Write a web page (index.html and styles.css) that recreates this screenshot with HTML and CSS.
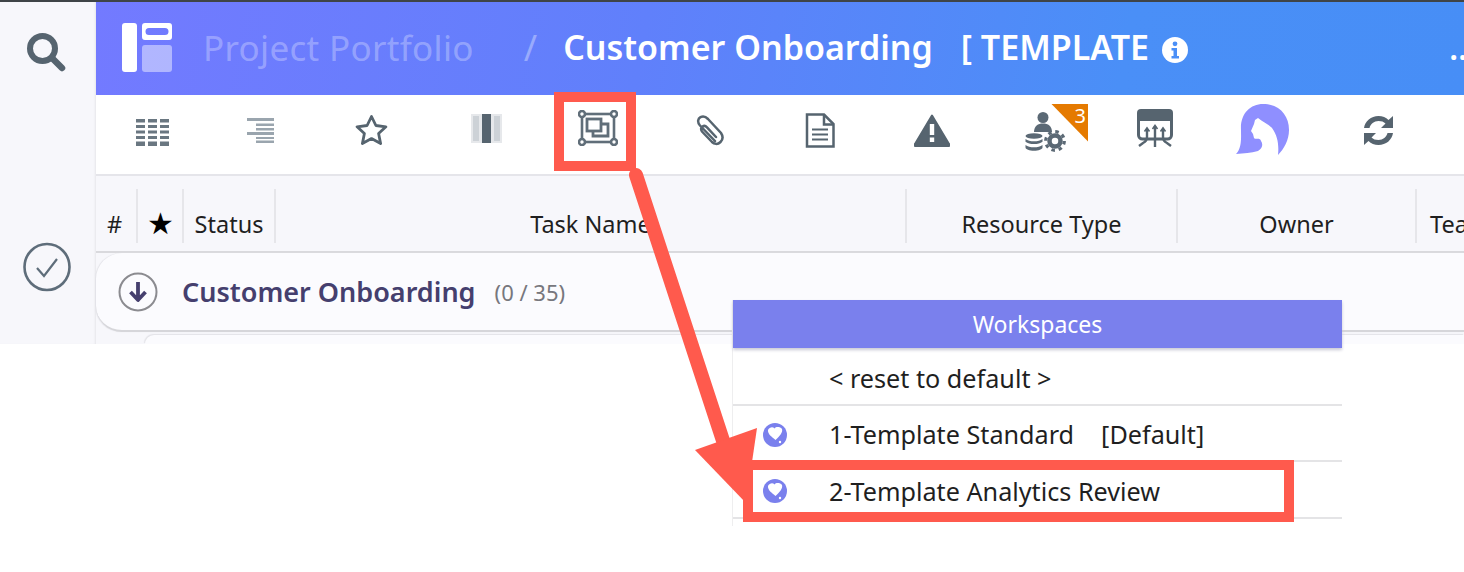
FILE: index.html
```html
<!DOCTYPE html>
<html lang="en">
<head>
<meta charset="utf-8">
<title>Customer Onboarding</title>
<link rel="stylesheet" href="styles.css">
</head>
<body>
<div class="canvas">
  <div class="app">
    <aside class="sidebar">
      <svg class="side-search" viewBox="0 0 40 40"><circle cx="16.500" cy="16.500" r="12.500" fill="none" stroke="#56646f" stroke-width="6"/><path d="M26 26l10 10" stroke="#56646f" stroke-width="6.500" stroke-linecap="round"/></svg>
      <svg class="side-check" viewBox="0 0 48 50"><ellipse cx="24" cy="25" rx="22.500" ry="23" fill="none" stroke="#5e6d7a" stroke-width="2.600"/><path d="M14 26l7 8 13-17" fill="none" stroke="#5e6d7a" stroke-width="2.200"/></svg>
    </aside>
    <main class="main">
      <header class="topbar">
        <svg class="logo" viewBox="0 0 50 49"><rect width="15" height="49" rx="3" fill="#fff"/><path fill-rule="evenodd" d="M23 0h24a3 3 0 0 1 3 3v11a3 3 0 0 1-3 3H23a3 3 0 0 1-3-3V3a3 3 0 0 1 3-3zm4 5a2.500 2.500 0 0 0 0 7h16a2.500 2.500 0 0 0 0-7z" fill="#fff"/><rect x="20" y="22" width="30" height="27" rx="3" fill="#fff" fill-opacity=".45"/></svg>
        <span class="crumb">Project Portfolio</span>
        <span class="slash">/</span>
        <span class="title">Customer Onboarding</span>
        <span class="title tag">[ TEMPLATE</span>
        <svg class="info" viewBox="0 0 26 26"><circle cx="13" cy="13" r="13" fill="#fff"/><circle cx="13" cy="6.800" r="2.400" fill="#4a8ff7"/><path d="M9.500 11h5.500v8h2v2.500H9.500V19h2v-5.500h-2z" fill="#4a8ff7"/></svg>
        <span class="more">..</span>
      </header>

      <nav class="toolbar">
        <span class="tool tool-low"><svg width="33" height="27" viewBox="0 0 33 27" fill="#6a7781"><path d="M0 0h9v3.500H0zM12 0h9v3.500h-9zM24 0h9v3.500h-9zM0 6h9v3H0zM12 6h9v3h-9zM24 6h9v3h-9zM0 11.500h9v3H0zM12 11.500h9v3h-9zM24 11.500h9v3h-9zM0 17h9v3H0zM12 17h9v3h-9zM24 17h9v3h-9zM0 22.500h9V27H0zM12 22.500h9V27h-9zM24 22.500h9V27h-9z"/></svg></span>
        <span class="tool"><svg width="27" height="25" viewBox="0 0 27 25" fill="#9aa5ae"><path d="M0 0h27v3H0zM9 5.500h18v2.500H9zM9 10h18v2.500H9zM0 14h27v3H0zM9 19h18v2H9zM9 22.500h18V25H9z"/></svg></span>
        <span class="tool"><svg width="33" height="31" viewBox="0 0 33 31"><path d="M16.500 1.500l4.400 9 10 1.300-7.300 6.800 2 10-9.100-5-9.100 5 2-10-7.300-6.800 10-1.300z" fill="none" stroke="#56646f" stroke-width="2.800" stroke-linejoin="round"/></svg></span>
        <span class="tool tool-high"><svg width="31" height="29" viewBox="0 0 31 29"><rect width="31" height="29" fill="#e6e8eb"/><rect x="2" y="2" width="6" height="25" fill="#cdd2d7"/><rect x="23" y="2" width="6" height="25" fill="#cdd2d7"/><rect x="11" width="9" height="29" fill="#56646f"/></svg></span>
        <span class="tool tool-high"><svg width="40" height="36" viewBox="0 0 40 36" fill="none" stroke="#606e79" stroke-width="2.600"><rect x="4" y="4" width="32" height="28"/><rect x="9" y="9" width="14" height="12" stroke-width="2.800"/><path d="M23 14h7v12H15v-5" stroke-width="2.800"/><g fill="#fff"><circle cx="4" cy="4" r="3"/><circle cx="36" cy="4" r="3"/><circle cx="4" cy="32" r="3"/><circle cx="36" cy="32" r="3"/></g></svg></span>
        <span class="tool"><svg width="30" height="31" viewBox="0 0 30 31" fill="none" stroke="#56646f" stroke-width="2.500" stroke-linecap="round"><path d="M21 26L6 10.500C3 7 4 3.500 6.500 2.200 9.500.8 12 2 14 4l13 14c2 3 2 6.500-.5 9-3 3-6.500 2-8.500 0L8 16.500c-1.500-2-1-4 .5-5s3-.8 4.500.8l9 9.700"/></svg></span>
        <span class="tool"><svg width="30" height="35" viewBox="0 0 30 35" fill="none" stroke="#56646f" stroke-width="2.500"><path d="M2 1.500h17l9.500 9.500v22.500H2z"/><path d="M19 1.500v10h9.500"/><path d="M7 16.500h16M7 21.500h16M7 26.500h16" stroke-width="2.200"/></svg></span>
        <span class="tool"><svg width="36" height="33" viewBox="0 0 36 33"><path d="M18 1.500L35 30a1.500 1.500 0 0 1-1.300 2.500H2.300A1.500 1.500 0 0 1 1 30z" fill="#56646f" stroke="#56646f" stroke-linejoin="round" stroke-width="2"/><rect x="15.800" y="10" width="4.400" height="11" fill="#fff"/><rect x="15.800" y="23.500" width="4.400" height="4.500" fill="#fff"/></svg></span>
        <span class="tool tool-badge">
          <svg width="41" height="40" viewBox="0 0 41 40" fill="#5b6975"><circle cx="18" cy="5.500" r="5.500"/><path d="M9 20c0-6 4-8.500 9-8.500s9 2.500 9 8.500H9z"/><ellipse cx="9" cy="24" rx="8.500" ry="2.800"/><path d="M.5 27c2 1.800 5 2.300 8.500 2.300s6.500-.5 8.500-2.300v2.800c-2 1.800-5 2.300-8.500 2.300s-6.500-.5-8.500-2.300zM.5 33c2 1.800 5 2.300 8.500 2.300s6.500-.5 8.500-2.300v2.500c0 1.900-4 3.200-8.500 3.200S.5 37.400.5 35.500z"/><circle cx="30" cy="29" r="5.500" fill="none" stroke="#5b6975" stroke-width="4.500"/><circle cx="30" cy="29" r="9.300" fill="none" stroke="#5b6975" stroke-width="3.200" stroke-dasharray="3.500 3.800"/></svg>
          <span class="badge"><span class="badge-num">3</span></span>
        </span>
        <span class="tool"><svg width="36" height="42" viewBox="0 0 36 42" fill="none" stroke="#56646f"><path d="M4 0h28a4 4 0 0 1 4 4v8H0V4a4 4 0 0 1 4-4z" fill="#56646f" stroke="none"/><path d="M1.500 10v16a4 4 0 0 0 4 4h25a4 4 0 0 0 4-4V10" stroke-width="3"/><path d="M18 17v21M10 20v8q0 4-4 6l-4 3M26 20v8q0 4 4 6l4 3" stroke-width="2.400"/><path d="M15.500 20l2.500-3.500 2.500 3.500M7.500 22.500l2.500-3.500 2.500 3.500M23.500 22.500l2.500-3.500 2.500 3.500" stroke-width="1.600"/></svg></span>
        <span class="tool"><svg width="54" height="52" viewBox="0 0 54 52"><path d="M0 50C6 44 5 34 5 26 4 10 14 0 27 0c16 0 26 11 26 26 0 10-5 19-11 25 1-9 0-19-6-27-4-4-9-6-14-10l-3 2-1 4-3 7 2 3 1 4c2 2 6-1 7 3 2 3 2 7-3 10-7 2-14 2-22 3z" fill="#8f8fff"/></svg></span>
        <span class="tool"><svg width="31" height="29" viewBox="0 0 31 29" fill="#56646f"><path d="M1 12C2 5 8 0 15.500 0c4 0 7.500 1.500 10 4L30 0v12H18l4.500-4.500C20.800 5.800 18.500 5 15.500 5 11 5 7.500 8 6.500 12zM30 17c-1 7-7 12-14.500 12-4 0-7.500-1.500-10-4L1 29V17h12l-4.500 4.500c1.700 1.700 4 2.500 7 2.500 4.500 0 8-3 9-7z"/></svg></span>
      </nav>

      <div class="thead">
        <span class="th th-num"><span>#</span></span>
        <span class="th th-star"><span>★</span></span>
        <span class="th"><span>Status</span></span>
        <span class="th"><span>Task Name</span></span>
        <span class="th"><span>Resource Type</span></span>
        <span class="th"><span>Owner</span></span>
        <span class="th th-team"><span>Team</span></span>
      </div>

      <div class="group">
        <svg class="group-toggle" viewBox="0 0 40 40"><circle cx="20" cy="20" r="18.500" fill="none" stroke="#8b8b90" stroke-width="2"/><path d="M20 10v18M12.500 20l7.500 8 7.500-8" fill="none" stroke="#453f6e" stroke-width="3.800" stroke-linejoin="round"/></svg>
        <span class="group-name">Customer Onboarding</span>
        <span class="group-count">(0 / 35)</span>
      </div>
      <div class="subgroup"></div>
    </main>
  </div>

  <section class="popup">
    <div class="popup-head">Workspaces</div>
    <div class="popup-row">&lt; reset to default &gt;</div>
    <div class="popup-row">
      <svg class="globe" viewBox="0 0 24 24"><circle cx="12" cy="12" r="12" fill="#7a80ed"/><path d="M5 7c1.500-3 5-3.500 6.500-1.500C13 3.500 17 3.500 19 6c1 3-2 7-6.500 11C9 14 4.500 11 5 7z" fill="#fff"/><circle cx="17" cy="19" r="1.200" fill="#fff"/></svg>
      <span>1-Template Standard</span><span class="row-default">[Default]</span>
    </div>
    <div class="popup-row popup-row-last">
      <svg class="globe" viewBox="0 0 24 24"><circle cx="12" cy="12" r="12" fill="#7a80ed"/><path d="M5 7c1.500-3 5-3.500 6.500-1.500C13 3.500 17 3.500 19 6c1 3-2 7-6.500 11C9 14 4.500 11 5 7z" fill="#fff"/><circle cx="17" cy="19" r="1.200" fill="#fff"/></svg>
      <span>2-Template Analytics Review</span>
    </div>
  </section>

  <svg class="arrow" viewBox="0 0 1464 572"><path d="M636 175L730 462" fill="none" stroke="#ff5a4d" stroke-width="14" stroke-linecap="round"/><path d="M695 450L757 428 746 503z" fill="#ff5a4d"/></svg>
  <div class="mark mark-tool"></div>
  <div class="mark mark-row"></div>
</div>
</body>
</html>
```
FILE: styles.css
```css
* { box-sizing: border-box; }
html, body { margin: 0; height: 100%; background: #fff; overflow: hidden; }
body { font-family: "Noto Sans", "Open Sans", sans-serif; color: #1f1f1f; }

.canvas { position: relative; width: 1464px; height: 572px; overflow: hidden; background: #fff; }

.app { display: flex; height: 344px; border-top: 2px solid #3f4447; overflow: hidden; }

.sidebar { flex: 0 0 96px; background: #f7f7fb; display: flex; flex-direction: column; align-items: center; padding-top: 30px; box-shadow: inset -2px 0 3px -2px #d5d5da; }
.side-search { width: 40px; height: 40px; margin-left: -5px; }
.side-check { width: 48px; height: 50px; margin-top: 170px; margin-left: -2px; }

.main { flex: 1; min-width: 0; background: #f7f7fb; display: flex; flex-direction: column; }

.topbar { flex: 0 0 93px; display: flex; align-items: center; padding: 0 0 3px 26px; color: #fff; background: linear-gradient(100deg, #737aff 0%, #6080fb 40%, #4a8ff7 75%, #478ef6 100%); white-space: nowrap; }
.logo { width: 50px; height: 49px; margin-top: 1px; }
.crumb { margin-left: 31px; font-size: 35px; color: rgba(255, 255, 255, .3); letter-spacing: .32px; }
.slash { margin-left: 50px; font-size: 36px; color: rgba(255, 255, 255, .35); }
.title { font-size: 34px; font-weight: 600; }
.slash + .title { margin-left: 26px; }
.tag { margin-left: 28px; }
.info { width: 26px; height: 26px; margin-left: 13px; margin-top: 6px; }
.more { margin-left: auto; margin-right: -3px; font-size: 32px; font-weight: 600; }

.toolbar { flex: 0 0 81px; background: #fff; border-bottom: 2px solid #e5e5ea; padding-bottom: 9px; display: grid; grid-template-columns: 112px 104px 118px 112px 112px 110px 112px 112px 138px 58px 158px 72px; align-items: center; justify-items: center; }
.tool { display: flex; position: relative; }
.tool-low { margin-top: 4px; }
.tool-high { margin-top: -4px; }
.tool-badge { width: 64px; height: 48px; padding-top: 8px; margin-top: -5px; }
.badge { position: absolute; left: 26px; top: 0; width: 37px; height: 38px; background: #e57a00; clip-path: polygon(0 0, 100% 0, 100% 100%); }
.badge-num { position: absolute; right: 2px; top: 0; color: #fff; font-size: 20px; line-height: 24px; }

.thead { flex: 0 0 77px; display: grid; grid-template-columns: 42px 46px 92px 631px 271px 239px 1fr; align-items: stretch; border-bottom: 2px solid #d9d9dd; padding: 13px 0 8px; font-size: 23.500px; color: #1f1f1f; white-space: nowrap; overflow: hidden; }
.th { display: flex; align-items: flex-end; justify-content: center; border-right: 2px solid #e6e6ea; padding-bottom: 3px; }
.th-num { padding-right: 3px; }
.th-star { font-size: 30px; color: #000; padding-bottom: 0; }
.th-team { border-right: 0; justify-content: flex-start; padding-left: 13px; }

.group { flex: 0 0 79px; display: flex; align-items: center; padding-left: 22px; background: #fbfbfe; border-radius: 26px 0 0 26px; border-bottom: 2px solid #d6d6da; box-shadow: -1px 0 1px #e3e3e8; }
.group-toggle { width: 40px; height: 40px; }
.group-name { margin-left: 24px; font-size: 27px; font-weight: 600; color: #453f6e; }
.group-count { margin-left: 19px; font-size: 22px; color: #77777d; }

.subgroup { flex: 1; margin: 3px 0 0 49px; background: #fbfbfe; border-radius: 26px 0 0 0; box-shadow: -1px -1px 1px #e3e3e8; }

.popup { position: absolute; left: 733px; top: 300px; width: 609px; height: 226px; background: #fff; box-shadow: -1px 0 0 #eeeeef; font-size: 25.200px; color: #1f1f1f; }
.popup-head { height: 48px; margin-bottom: 2px; display: flex; align-items: center; justify-content: center; background: #7a80ed; color: #fff; font-size: 23px; box-shadow: 0 2px 3px #c9c9d6; }
.popup-row { height: 56px; display: flex; align-items: center; padding: 2px 0 0 96px; position: relative; border-bottom: 2px solid #e4e4e6; white-space: nowrap; }
.popup-row-last { height: 57px; padding-top: 3px; }
.globe { position: absolute; left: 30px; top: 17px; width: 24px; height: 24px; }
.row-default { margin-left: 27px; }

.arrow { position: absolute; left: 0; top: 0; width: 1464px; height: 572px; pointer-events: none; }
.mark { position: absolute; border: 10px solid #ff5a4d; }
.mark-tool { left: 554px; top: 92px; width: 82px; height: 79px; }
.mark-row { left: 743px; top: 460px; width: 551px; height: 62px; }
```
